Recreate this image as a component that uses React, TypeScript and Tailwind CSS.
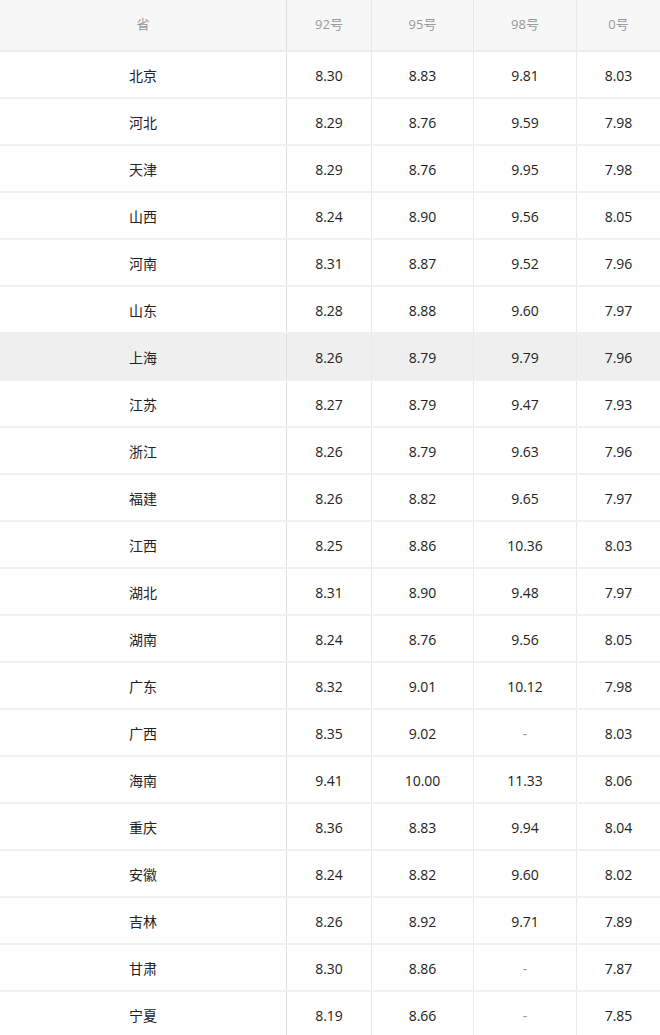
const rows: [string, string, string, string, string][] = [
  ['北京', '8.30', '8.83', '9.81', '8.03'],
  ['河北', '8.29', '8.76', '9.59', '7.98'],
  ['天津', '8.29', '8.76', '9.95', '7.98'],
  ['山西', '8.24', '8.90', '9.56', '8.05'],
  ['河南', '8.31', '8.87', '9.52', '7.96'],
  ['山东', '8.28', '8.88', '9.60', '7.97'],
  ['上海', '8.26', '8.79', '9.79', '7.96'],
  ['江苏', '8.27', '8.79', '9.47', '7.93'],
  ['浙江', '8.26', '8.79', '9.63', '7.96'],
  ['福建', '8.26', '8.82', '9.65', '7.97'],
  ['江西', '8.25', '8.86', '10.36', '8.03'],
  ['湖北', '8.31', '8.90', '9.48', '7.97'],
  ['湖南', '8.24', '8.76', '9.56', '8.05'],
  ['广东', '8.32', '9.01', '10.12', '7.98'],
  ['广西', '8.35', '9.02', '-', '8.03'],
  ['海南', '9.41', '10.00', '11.33', '8.06'],
  ['重庆', '8.36', '8.83', '9.94', '8.04'],
  ['安徽', '8.24', '8.82', '9.60', '8.02'],
  ['吉林', '8.26', '8.92', '9.71', '7.89'],
  ['甘肃', '8.30', '8.86', '-', '7.87'],
  ['宁夏', '8.19', '8.66', '-', '7.85'],
]

const cols = 'grid grid-cols-[286px_85px_102px_103px_84px]'

export default function App() {
  return (
    <div className="w-[660px] h-[1035px] overflow-hidden bg-white font-['Open_Sans','Noto_Sans_CJK_SC',sans-serif]">
      <div className={`${cols} h-[52px] bg-[#f7f7f7] border-b-2 border-[#ececec] text-[13px] text-[#999]`}>
        <div className="flex items-center justify-center">省</div>
        <div className="flex items-center justify-center border-l border-[#dedede]">92号</div>
        <div className="flex items-center justify-center border-l border-[#e8e8e8]">95号</div>
        <div className="flex items-center justify-center border-l border-[#e8e8e8]">98号</div>
        <div className="flex items-center justify-center border-l border-[#e8e8e8]">0号</div>
      </div>
      {rows.map((r, i) => (
        <div
          key={r[0]}
          className={`${cols} h-[47px] border-b-2 border-[#f0f0f0] text-[14px] text-[#222] ${i === 6 ? 'bg-[#efefef]' : 'bg-white'}`}
        >
          <div className="flex items-center justify-center pt-px">{r[0]}</div>
          <div className="flex items-center justify-center pt-px border-l border-[#dedede]">{r[1]}</div>
          <div className="flex items-center justify-center pt-px border-l border-[#e8e8e8]">{r[2]}</div>
          <div className={`flex items-center justify-center pt-px border-l border-[#e8e8e8] ${r[3] === '-' ? 'text-[#999]' : ''}`}>{r[3]}</div>
          <div className="flex items-center justify-center pt-px border-l border-[#e8e8e8]">{r[4]}</div>
        </div>
      ))}
    </div>
  )
}
